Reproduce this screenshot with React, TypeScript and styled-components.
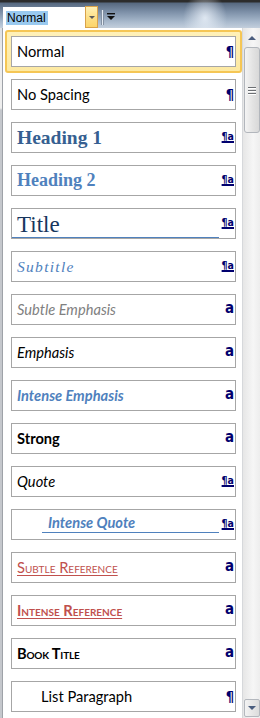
import styled, { createGlobalStyle, css } from 'styled-components';

const GlobalStyle = createGlobalStyle`
    html, body {
        margin: 0;
        padding: 0;
        overflow: hidden;
        background: #c9cdd3;
    }
`;

type Kind = 'para' | 'linked' | 'char';
type Variant =
    | 'normal' | 'noSpacing' | 'heading1' | 'heading2' | 'title' | 'subtitle'
    | 'subtleEmphasis' | 'emphasis' | 'intenseEmphasis' | 'strong' | 'quote'
    | 'intenseQuote' | 'subtleReference' | 'intenseReference' | 'bookTitle' | 'listParagraph';

type StyleEntry = { name: string; kind: Kind; variant: Variant };

const styles: StyleEntry[] = [
    { name: 'Normal', kind: 'para', variant: 'normal' },
    { name: 'No Spacing', kind: 'para', variant: 'noSpacing' },
    { name: 'Heading 1', kind: 'linked', variant: 'heading1' },
    { name: 'Heading 2', kind: 'linked', variant: 'heading2' },
    { name: 'Title', kind: 'linked', variant: 'title' },
    { name: 'Subtitle', kind: 'linked', variant: 'subtitle' },
    { name: 'Subtle Emphasis', kind: 'char', variant: 'subtleEmphasis' },
    { name: 'Emphasis', kind: 'char', variant: 'emphasis' },
    { name: 'Intense Emphasis', kind: 'char', variant: 'intenseEmphasis' },
    { name: 'Strong', kind: 'char', variant: 'strong' },
    { name: 'Quote', kind: 'linked', variant: 'quote' },
    { name: 'Intense Quote', kind: 'linked', variant: 'intenseQuote' },
    { name: 'Subtle Reference', kind: 'char', variant: 'subtleReference' },
    { name: 'Intense Reference', kind: 'char', variant: 'intenseReference' },
    { name: 'Book Title', kind: 'char', variant: 'bookTitle' },
    { name: 'List Paragraph', kind: 'para', variant: 'listParagraph' },
];

const Screen = styled.div`
    width: 260px;
    height: 718px;
    display: flex;
    flex-direction: column;
    overflow: hidden;
`;

const Toolbar = styled.div`
    height: 28px;
    flex-shrink: 0;
    display: flex;
    align-items: flex-start;
    background:
        radial-gradient(ellipse 22px 26px at 205px 18px, rgba(235, 242, 250, 0.85), rgba(235, 242, 250, 0) 100%),
        linear-gradient(#2c2c2c 0, #2c2c2c 2px, #56687f 3px, #7d90a8 12px, #a9bacd 22px, #c3cfdc 28px);
`;

const Combo = styled.div`
    display: flex;
    margin: 6px 0 0 3px;
    height: 22px;
`;

const ComboInput = styled.div`
    width: 82px;
    height: 21px;
    margin-top: 1px;
    background: #fff;
    display: flex;
    align-items: center;
    padding-left: 3px;
    box-sizing: border-box;
`;

const Selection = styled.span`
    font-family: "Liberation Sans", Arial, sans-serif;
    font-size: 12px;
    line-height: 14px;
    color: #000;
    background: #99c9ef;
    padding: 0 2px 0 1px;
`;

const DropButton = styled.div`
    width: 13px;
    height: 22px;
    box-sizing: border-box;
    border: 1px solid #d9a24a;
    background: linear-gradient(#fff0b4, #fde08a 50%, #fcd56a);
    display: flex;
    align-items: center;
    justify-content: center;
`;

const Caret = styled.span`
    width: 0;
    height: 0;
    border-left: 3px solid transparent;
    border-right: 3px solid transparent;
    border-top: 3px solid #5a5a5a;
`;

const Divider = styled.div`
    width: 1px;
    height: 15px;
    margin: 10px 0 0 4px;
    background: #e4ebf3;
    box-shadow: -1px 0 0 #8391a3, 1px 0 0 #8391a3;
`;

const MoreIcon = styled.svg`
    margin: 13px 0 0 4px;
`;

const Body = styled.div`
    flex: 1;
    display: flex;
    min-height: 0;
`;

const DocEdge = styled.div`
    width: 2px;
    background: linear-gradient(#dde0e4 0, #eeeeee 30px, #eeeeee 80px, #c4c7cc 82px, #c4c7cc 100%);
`;

const Panel = styled.div`
    flex: 1;
    display: flex;
    background: #fff;
    border-left: 1px solid #9ea2a8;
    min-height: 0;
`;

const StyleList = styled.div`
    flex: 1;
    display: flex;
    flex-direction: column;
    gap: 12px;
    padding: 8px 6px 0 8px;
`;

const Frame = styled.div`
    margin: -6px -6px -6px -6px;
    padding: 4px 4px 4px 4px;
    border: 2px solid #f5c655;
    border-radius: 3px;
    background: linear-gradient(#fff1b8, #fde9a2);
`;

const Item = styled.div`
    height: 31px;
    box-sizing: border-box;
    border: 1px solid #a6a6a6;
    background: #fff;
    display: flex;
    align-items: stretch;
`;

const sans = `"Lato", "Liberation Sans", sans-serif`;
const serif = `"Liberation Serif", "Times New Roman", serif`;

const variantCss: Record<Variant, ReturnType<typeof css>> = {
    normal: css`font-family: ${sans}; font-size: 14.67px;`,
    noSpacing: css`font-family: ${sans}; font-size: 14.67px;`,
    heading1: css`font-family: ${serif}; font-size: 19.5px; font-weight: bold; color: #365f91;`,
    heading2: css`font-family: ${serif}; font-size: 18px; font-weight: bold; color: #4f81bd;`,
    title: css`
        font-family: ${serif};
        font-size: 23px;
        color: #17365d;
        border-bottom: 1px solid #4f81bd;
        padding-top: 3px;
    `,
    subtitle: css`font-family: ${serif}; font-size: 15.5px; font-style: italic; letter-spacing: 1.3px; color: #4f81bd;`,
    subtleEmphasis: css`font-family: ${sans}; font-size: 14.67px; font-style: italic; color: #808080;`,
    emphasis: css`font-family: ${sans}; font-size: 14.67px; font-style: italic;`,
    intenseEmphasis: css`font-family: ${sans}; font-size: 14.67px; font-style: italic; font-weight: bold; color: #4f81bd;`,
    strong: css`font-family: ${sans}; font-size: 14.67px; font-weight: bold;`,
    quote: css`font-family: ${sans}; font-size: 14.67px; font-style: italic;`,
    intenseQuote: css`
        font-family: ${sans};
        font-size: 14.67px;
        font-style: italic;
        font-weight: bold;
        color: #4f81bd;
        margin: 0 0 6px 30px;
        padding-left: 6px;
        padding-top: 2px;
        border-bottom: 1px solid #4f81bd;
    `,
    subtleReference: css`
        font-family: ${sans};
        font-size: 14.67px;
        font-variant: small-caps;
        color: #c0504d;
        text-decoration: underline;
        text-underline-offset: 2px;
    `,
    intenseReference: css`
        font-family: ${sans};
        font-size: 14.67px;
        font-variant: small-caps;
        font-weight: bold;
        color: #c0504d;
        text-decoration: underline;
        text-underline-offset: 2px;
    `,
    bookTitle: css`font-family: ${sans}; font-size: 14.67px; font-variant: small-caps; font-weight: bold; letter-spacing: -0.2px;`,
    listParagraph: css`font-family: ${sans}; font-size: 14.67px; padding-left: 29px;`,
};

const Name = styled.div<{ $variant: Variant }>`
    flex: 1;
    display: flex;
    align-items: center;
    padding-left: 5px;
    color: #000;
    white-space: nowrap;
    overflow: hidden;
    ${(props) => variantCss[props.$variant]}
`;

const Marker = styled.div<{ $kind: Kind }>`
    width: 15px;
    display: flex;
    justify-content: flex-end;
    padding-right: 1px;
    font-family: "DejaVu Sans Condensed", "DejaVu Sans", sans-serif;
    font-weight: bold;
    color: #00006e;
    line-height: 1;

    ${(props) => props.$kind === 'para' && css`
        font-size: 14.5px;
        padding-top: 7px;
    `}
    ${(props) => props.$kind === 'linked' && css`
        font-size: 10.5px;
        padding-top: 8px;
        text-decoration: underline;
        text-underline-offset: 1px;
        text-decoration-thickness: 2px;
    `}
    ${(props) => props.$kind === 'char' && css`
        font-size: 15px;
        padding-top: 6px;
    `}
`;

const Scrollbar = styled.div`
    width: 17px;
    display: flex;
    flex-direction: column;
    border-left: 1px solid #d6d8db;
    background: linear-gradient(90deg, #e6e6e6, #f6f6f6 60%, #ededed);
    padding-top: 1px;
`;

const ScrollButton = styled.div`
    height: 18px;
    display: flex;
    align-items: center;
    justify-content: center;
    flex-shrink: 0;
`;

const DownButton = styled(ScrollButton)`
    height: 16px;
    margin: auto 0 1px 1px;
    border: 1px solid #b4b8be;
    border-radius: 2px;
    background: linear-gradient(90deg, #f3f3f3, #dcdcdc);
`;

const Arrow = styled.span<{ $down?: boolean }>`
    width: 0;
    height: 0;
    border-left: 4px solid transparent;
    border-right: 4px solid transparent;
    ${(props) => props.$down
        ? css`border-top: 4px solid #4a5d7e;`
        : css`border-bottom: 4px solid #4a5d7e;`}
`;

const Thumb = styled.div`
    height: 86px;
    margin: 0 0 0 1px;
    box-sizing: border-box;
    border: 1px solid #b2b6bc;
    border-radius: 3px;
    background: linear-gradient(90deg, #f4f4f4, #e3e3e3 55%, #d8d8d8);
    display: flex;
    flex-direction: column;
    align-items: center;
    justify-content: center;
    gap: 2px;
`;

const Grip = styled.span`
    width: 8px;
    height: 1px;
    background: #6c6f73;
    box-shadow: 0 1px 0 #ffffff;
`;

function StyleBox({ entry }: { entry: StyleEntry }) {
    const marker = entry.kind === 'para' ? '¶' : entry.kind === 'linked' ? '¶a' : 'a';
    return (
        <Item>
            <Name $variant={entry.variant}>{entry.name}</Name>
            <Marker $kind={entry.kind}>{marker}</Marker>
        </Item>
    );
}

export default function App() {
    return (
        <>
            <GlobalStyle />
            <Screen>
                <Toolbar>
                    <Combo>
                        <ComboInput>
                            <Selection>Normal</Selection>
                        </ComboInput>
                        <DropButton>
                            <Caret />
                        </DropButton>
                    </Combo>
                    <Divider />
                    <MoreIcon width="8" height="8" viewBox="0 0 8 8">
                        <rect x="0" y="0" width="8" height="1.4" fill="#111" />
                        <path d="M0 3 L8 3 L4 7 Z" fill="#111" />
                    </MoreIcon>
                </Toolbar>
                <Body>
                    <DocEdge />
                    <Panel>
                        <StyleList>
                            {styles.map((entry, index) =>
                                index === 0 ? (
                                    <Frame key={entry.name}>
                                        <StyleBox entry={entry} />
                                    </Frame>
                                ) : (
                                    <StyleBox key={entry.name} entry={entry} />
                                )
                            )}
                        </StyleList>
                        <Scrollbar>
                            <ScrollButton>
                                <Arrow />
                            </ScrollButton>
                            <Thumb>
                                <Grip />
                                <Grip />
                                <Grip />
                            </Thumb>
                            <DownButton>
                                <Arrow $down />
                            </DownButton>
                        </Scrollbar>
                    </Panel>
                </Body>
            </Screen>
        </>
    );
}
